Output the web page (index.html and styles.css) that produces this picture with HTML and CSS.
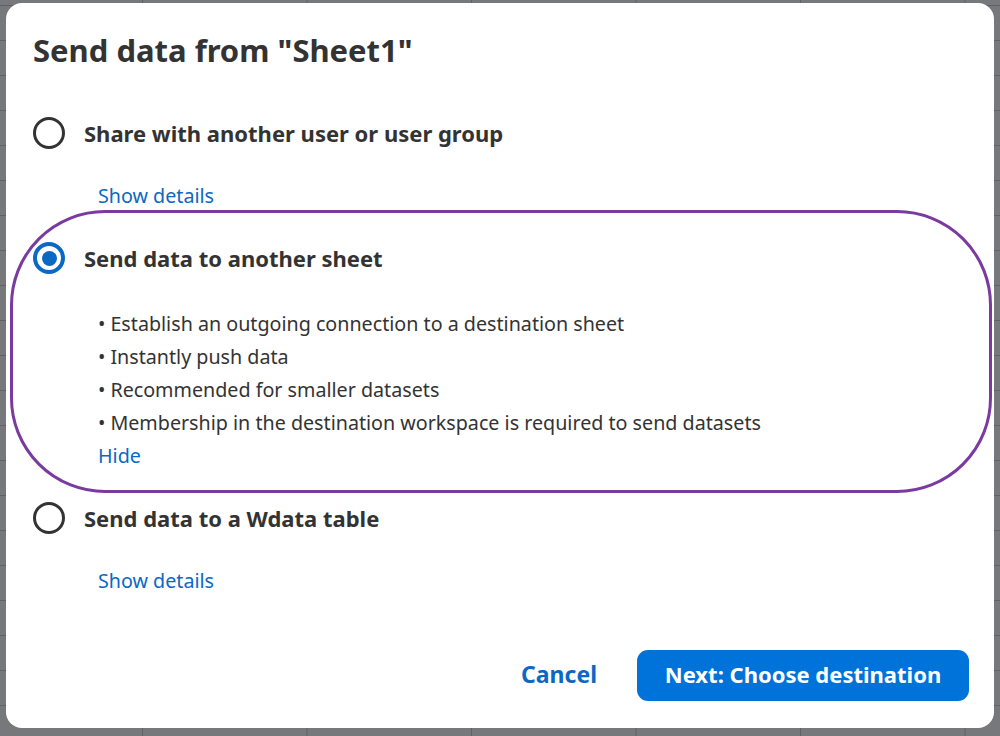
FILE: index.html
```html
<!DOCTYPE html>
<html>
<head>
<meta charset="utf-8">
<link rel="stylesheet" href="styles.css">
</head>
<body>
<div class="backdrop">
  <div class="dialog">
    <h1 class="title">Send data from "Sheet1"</h1>
    <div class="options">
      <div class="option">
        <label class="opt-head">
          <span class="radio"></span>
          <span class="opt-label">Share with another user or user group</span>
        </label>
        <div class="opt-body">
          <a class="link">Show details</a>
        </div>
      </div>
      <div class="option selected">
        <label class="opt-head">
          <span class="radio checked"><span class="dot"></span></span>
          <span class="opt-label">Send data to another sheet</span>
        </label>
        <div class="opt-body">
          <ul class="bullets">
            <li>Establish an outgoing connection to a destination sheet</li>
            <li>Instantly push data</li>
            <li>Recommended for smaller datasets</li>
            <li>Membership in the destination workspace is required to send datasets</li>
          </ul>
          <a class="link">Hide</a>
        </div>
        <div class="highlight"></div>
      </div>
      <div class="option">
        <label class="opt-head">
          <span class="radio"></span>
          <span class="opt-label">Send data to a Wdata table</span>
        </label>
        <div class="opt-body">
          <a class="link">Show details</a>
        </div>
      </div>
    </div>
    <div class="footer">
      <button class="btn-text">Cancel</button>
      <button class="btn-primary">Next: Choose destination</button>
    </div>
  </div>
</div>
</body>
</html>
```
FILE: styles.css
```css
* { box-sizing: border-box; }
html, body { margin: 0; padding: 0; }
body {
  width: 1000px;
  height: 736px;
  overflow: hidden;
  font-family: "Noto Sans", "Liberation Sans", sans-serif;
  color: #333;
}
.backdrop {
  width: 1000px;
  height: 736px;
  background-color: #76787c;
  background-image:
    linear-gradient(to right, #5f6166 1px, transparent 1px),
    linear-gradient(to bottom, #5f6166 1px, transparent 1px);
  background-size: 164.5px 35px, 164.5px 35px;
  background-position: 142px 5px, 142px 5px;
  padding: 3px 6px 0 6px;
}
.dialog {
  width: 988px;
  height: 725px;
  background: #fff;
  border-radius: 16px;
  padding: 24px 25px 27px 27px;
  display: flex;
  flex-direction: column;
}
.title {
  margin: 0;
  font-size: 31px;
  font-weight: 700;
  line-height: 46px;
  color: #333;
}
.options {
  display: flex;
  flex-direction: column;
  margin-top: 42px;
}
.option {
  position: relative;
  padding-bottom: 28px;
}
.opt-head {
  display: flex;
  align-items: center;
  gap: 19px;
  height: 36px;
}
.radio {
  width: 32px;
  height: 32px;
  border-radius: 50%;
  border: 3px solid #333;
  display: flex;
  align-items: center;
  justify-content: center;
  flex: none;
}
.radio.checked {
  border: 4px solid #0b68c4;
}
.dot {
  width: 15px;
  height: 15px;
  border-radius: 50%;
  background: #0b68c4;
}
.opt-label {
  font-size: 22px;
  font-weight: 700;
  color: #333;
}
.opt-body {
  padding-left: 65px;
  padding-top: 28px;
  font-size: 19.7px;
}
.link {
  display: block;
  color: #0b68c4;
  font-size: 19.7px;
  line-height: 33px;
  cursor: pointer;
}
.bullets {
  list-style: none;
  margin: 0;
  padding: 3px 0 0 0;
}
.bullets li {
  line-height: 33px;
  color: #333;
}
.bullets li::before {
  content: "\2022";
  margin-right: 5px;
}
.highlight {
  position: absolute;
  left: -23px;
  top: -30px;
  width: 982px;
  height: 283px;
  border: 3px solid #7a3aa0;
  border-radius: 95px;
  pointer-events: none;
}
.footer {
  margin-top: auto;
  display: flex;
  justify-content: flex-end;
  align-items: center;
  gap: 40px;
}
.btn-text {
  background: none;
  border: none;
  font-family: inherit;
  font-size: 23px;
  font-weight: 700;
  color: #0b68c4;
  padding: 0 0 3px 0;
}
.btn-primary {
  background: #0073db;
  color: #fff;
  border: none;
  border-radius: 11px;
  height: 51px;
  width: 332px;
  font-family: inherit;
  font-size: 22px;
  font-weight: 700;
  padding: 0 0 4px 0;
}
```
